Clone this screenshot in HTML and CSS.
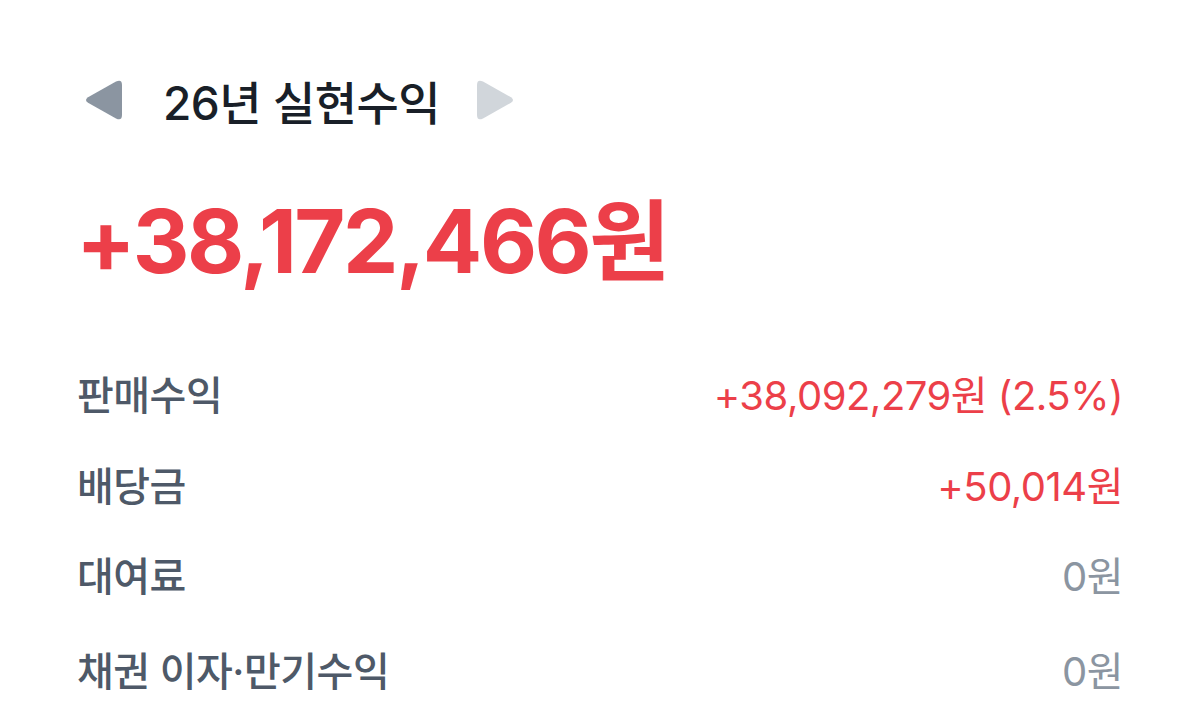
FILE: index.html
```html
<!DOCTYPE html>
<html lang="ko">
<head>
    <meta charset="UTF-8">
    <meta name="viewport" content="width=device-width, initial-scale=1.0">
    <title>실현수익</title>
    <link rel="stylesheet" href="styles.css">
</head>
<body>

    <div class="container">
        <div class="year-nav">
            <button class="nav-btn prev" aria-label="이전 연도">
                <svg width="40" height="40" viewBox="0 0 40 40">
                    <path d="M4 17.2 L32 1.6 Q38 -1.2 38 5 L38 35 Q38 41.2 32 38.4 L4 22.8 Q0 20 4 17.2 Z" fill="#8b95a1"/>
                </svg>
            </button>
            <h2 class="title">26년 실현수익</h2>
            <button class="nav-btn next" aria-label="다음 연도">
                <svg width="40" height="40" viewBox="0 0 40 40">
                    <path d="M36 17.2 L8 1.6 Q2 -1.2 2 5 L2 35 Q2 41.2 8 38.4 L36 22.8 Q40 20 36 17.2 Z" fill="#d1d6db"/>
                </svg>
            </button>
        </div>

        <p class="total plus">+38,172,466원</p>

        <ul class="breakdown">
            <li>
                <span class="label">판매수익</span>
                <span class="value plus">+38,092,279원 (2.5%)</span>
            </li>
            <li>
                <span class="label">배당금</span>
                <span class="value plus">+50,014원</span>
            </li>
            <li>
                <span class="label">대여료</span>
                <span class="value zero">0원</span>
            </li>
            <li>
                <span class="label">채권 이자·만기수익</span>
                <span class="value zero">0원</span>
            </li>
        </ul>
    </div>

</body>
</html>
```

FILE: styles.css
```css
body {
    margin: 0;
    background: #ffffff;
    font-family: Inter, "Noto Sans CJK KR", sans-serif;
    color: #191f28;
}

.container {
    padding: 60px 77px 0 77px;
}

.year-nav {
    display: flex;
    align-items: center;
    height: 80px;
}

.nav-btn {
    background: none;
    border: none;
    padding: 0;
    width: 40px;
    height: 40px;
    cursor: pointer;
}

.nav-btn svg {
    display: block;
}

.nav-btn.prev {
    margin-left: 7px;
}

.title {
    margin: 0 35px 0 39px;
    font-size: 46px;
    font-weight: 500;
    letter-spacing: -0.5px;
}

.total {
    margin: 46px 0 0 -1px;
    font-size: 88px;
    font-weight: 700;
    letter-spacing: -2.5px;
    line-height: 110px;
}

.plus {
    color: #ec3f49;
}

.breakdown {
    list-style: none;
    margin: 52px 0 0 0;
    padding: 0;
}

.breakdown li {
    display: flex;
    justify-content: space-between;
    align-items: center;
    height: 90.5px;
    font-size: 40px;
}

.breakdown li:last-child {
    padding-top: 4px;
}

.label {
    color: #4e5968;
    font-weight: 500;
    letter-spacing: -0.5px;
}

.value {
    font-weight: 400;
    letter-spacing: -0.5px;
}

.value.zero {
    color: #8b95a1;
}
```
